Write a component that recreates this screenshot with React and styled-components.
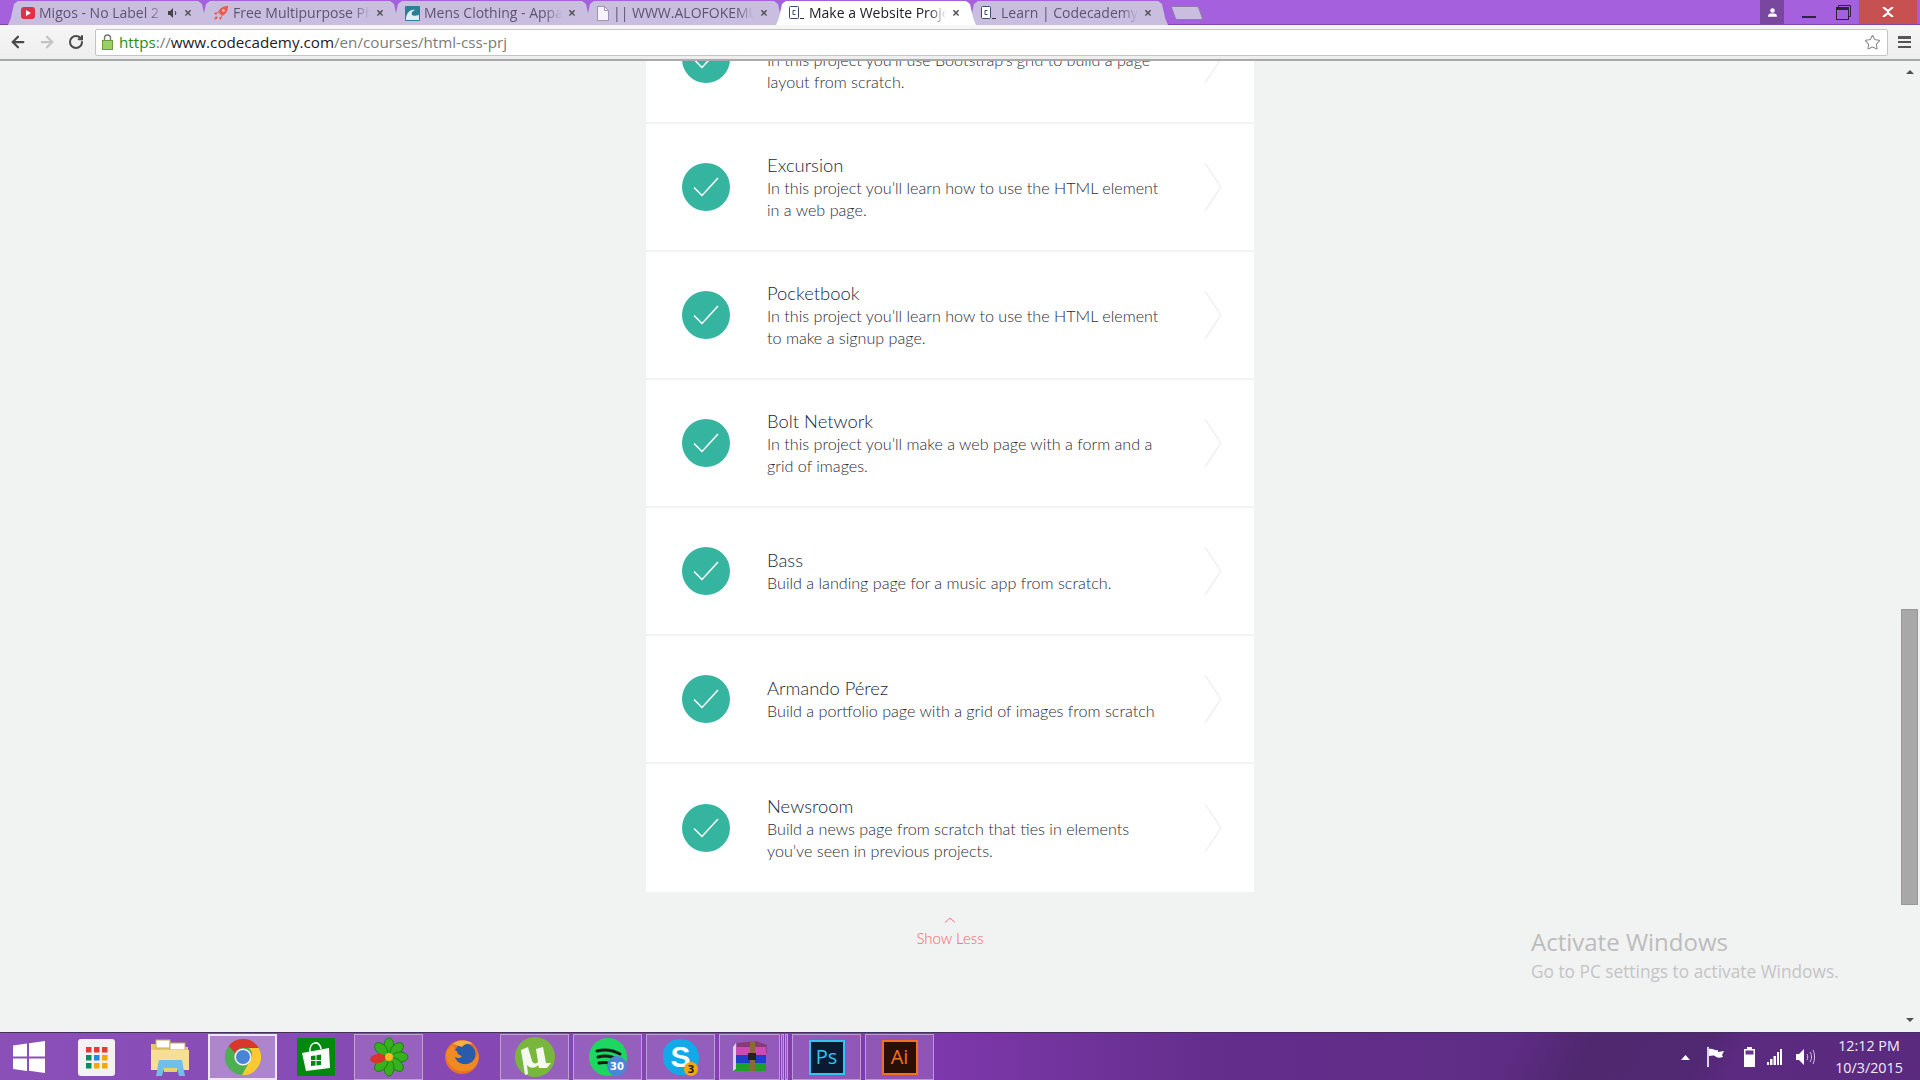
import styled, { createGlobalStyle } from "styled-components";
import { ArrowLeft, ArrowRight, RotateCw, Star } from "lucide-react";

const GlobalStyle = createGlobalStyle`
  html, body { margin: 0; padding: 0; background: #f1f2f2; }
  * { box-sizing: border-box; }
`;

const Screen = styled.div`
  width: 1920px;
  height: 1080px;
  display: flex;
  flex-direction: column;
  overflow: hidden;
  font-family: "Open Sans", "Liberation Sans", sans-serif;
`;

/* browser chrome */
const TitleBar = styled.div`
  height: 25px;
  flex: none;
  display: flex;
  background: #a561dd;
  border-bottom: 1px solid #7d4aa8;
`;

const TabStrip = styled.div`
  display: flex;
  padding: 1px 0 0 8px;
  height: 24px;
  filter: drop-shadow(0.6px 0 0 #8d7ca8);
`;

const Tab = styled.div`
  width: 200px;
  height: 24px;
  margin-right: -8px;
  padding: 0 14px 0 13px;
  display: flex;
  align-items: center;
  gap: 4px;
  flex: none;
  position: relative;
  z-index: ${({ $active }) => ($active ? 2 : 1)};
  background: ${({ $active }) => ($active ? "#ffffff" : "#c9bde0")};
  color: ${({ $active }) => ($active ? "#222" : "#5b5670")};
  clip-path: polygon(0 100%, 3px 70%, 6px 12%, 10px 0, 190px 0, 194px 12%, 197px 70%, 200px 100%);
`;

const TabLabel = styled.span`
  flex: 1;
  font-size: 14px;
  line-height: 20px;
  white-space: nowrap;
  overflow: hidden;
  -webkit-mask-image: linear-gradient(to right, #000 88%, transparent);
  mask-image: linear-gradient(to right, #000 88%, transparent);
`;

const TabClose = styled.span`
  width: 12px;
  font-size: 14px;
  font-weight: 700;
  line-height: 20px;
  text-align: center;
  color: #555;
`;

const NewTab = styled.div`
  width: 28px;
  height: 14px;
  margin: 5px 0 0 13px;
  flex: none;
  background: #c9bde0;
  border: 1px solid #8d7ca8;
  transform: skewX(20deg);
  border-radius: 2px;
`;

const WindowControls = styled.div`
  margin-left: auto;
  display: flex;
  height: 24px;
  padding-right: 3px;
`;

const ControlButton = styled.div`
  width: ${({ $w }) => $w}px;
  padding-right: ${({ $pr }) => $pr || 0}px;
  display: flex;
  align-items: center;
  justify-content: center;
  background: ${({ $bg }) => $bg || "transparent"};
`;

const Toolbar = styled.div`
  height: 36px;
  flex: none;
  display: flex;
  align-items: center;
  padding: 0 0 0 3px;
  background: linear-gradient(#f6f6f6, #eeeeee);
  border-bottom: 2px solid #a9a9a9;
`;

const NavButton = styled.div`
  width: 29px;
  display: flex;
  justify-content: center;
  color: ${({ $off }) => ($off ? "#c4c4c4" : "#4a4a4a")};
`;

const Omnibox = styled.div`
  margin-left: 5px;
  width: 1793px;
  height: 27px;
  display: flex;
  align-items: center;
  gap: 6px;
  padding: 0 6px;
  background: #fff;
  border: 1px solid #c4c4c4;
  border-radius: 2px;
  font-size: 15.2px;
`;

const Url = styled.div`
  flex: 1;
  color: #7b7b7b;
  white-space: nowrap;
  b { font-weight: 400; color: #1d8f1d; }
  i { font-style: normal; color: #222; }
`;

const MenuIcon = styled.div`
  margin-left: 10px;
  width: 13px;
  height: 12px;
  display: flex;
  flex-direction: column;
  justify-content: space-between;
  span { height: 2.5px; background: #555; display: block; }
`;

/* page */
const Body = styled.div`
  flex: 1;
  display: flex;
  min-height: 0;
`;

const Page = styled.div`
  flex: 1;
  position: relative;
  overflow: hidden;
  padding-left: 646px;
  background: #f1f2f2;
`;

const Card = styled.div`
  width: 608px;
  margin-top: -65px;
  background: #fff;
`;

const Row = styled.div`
  height: 128px;
  display: flex;
  align-items: center;
  padding: 0 32px 0 36px;
  border-bottom: ${({ $last }) => ($last ? "none" : "2px solid #f2f3f3")};
`;

const CheckCircle = styled.div`
  width: 48px;
  height: 48px;
  flex: none;
  border-radius: 50%;
  background: #35b5a0;
  display: flex;
  align-items: center;
  justify-content: center;
`;

const RowText = styled.div`
  margin-left: 37px;
  flex: 1;
`;

const RowTitle = styled.div`
  font-family: "Lato", "Noto Sans", sans-serif;
  font-weight: 300;
  font-size: 18.4px;
  line-height: 23px;
  color: #15293a;
`;

const RowDesc = styled.div`
  font-family: "Lato", "Noto Sans", sans-serif;
  font-weight: 300;
  font-size: 16.15px;
  line-height: 22px;
  color: #2b2b33;
  white-space: pre-line;
`;

const ShowLess = styled.div`
  width: 608px;
  padding-top: 25px;
  display: flex;
  flex-direction: column;
  align-items: center;
  gap: 5px;
  font-family: "Lato", "Noto Sans", sans-serif;
  font-weight: 300;
  font-size: 15px;
  line-height: 20px;
  color: #f9606e;
`;

const Watermark = styled.div`
  position: absolute;
  left: 1531px;
  top: 864px;
  color: #bcbcbc;
  font-family: "Open Sans", sans-serif;
  div:first-child { font-size: 24px; line-height: 34px; }
  div:last-child { font-size: 17.3px; line-height: 25px; color: #c4c4c4; }
`;

const ScrollTrack = styled.div`
  width: 19px;
  flex: none;
  display: flex;
  flex-direction: column;
  align-items: center;
  background: #f1f2f2;
  padding: 9px 2px 0 0;
`;

const ScrollThumb = styled.div`
  width: 17px;
  height: 296px;
  margin-top: 535px;
  background: #a8a8a8;
  border: 1px solid #989898;
`;

const ScrollArrow = styled.div`
  width: 0;
  height: 0;
  border-left: 4px solid transparent;
  border-right: 4px solid transparent;
  ${({ $down }) => ($down ? "border-top: 4px solid #505050; margin-top: 113px;" : "border-bottom: 4px solid #505050;")}
`;

/* taskbar */
const Taskbar = styled.div`
  height: 48px;
  flex: none;
  display: flex;
  align-items: stretch;
  padding-top: 1px;
  background:
    linear-gradient(118deg, transparent 78%, rgba(45, 30, 60, 0.28) 82%, rgba(45, 30, 60, 0.22) 88%, transparent 90%),
    linear-gradient(90deg, #8a50b8 0%, #8345b2 35%, #7d38ab 49%, #642e8c 63%, #5c2b82 85%, #592a7e 100%);
  border-top: 1px solid #43305e;
`;

const StartButton = styled.div`
  width: 58px;
  margin-right: 4px;
  display: flex;
  align-items: center;
  justify-content: center;
`;

const TaskButton = styled.div`
  width: ${({ $w }) => $w || 69}px;
  margin-right: ${({ $mr }) => ($mr === undefined ? 4 : $mr)}px;
  height: 46px;
  flex: none;
  display: flex;
  align-items: center;
  justify-content: center;
  position: relative;
  background: ${({ $state }) =>
    $state === "active" ? "rgba(255,255,255,0.32)" : $state === "open" ? "rgba(255,255,255,0.14)" : "transparent"};
  border: ${({ $state }) =>
    $state === "active" ? "2px solid #efe6f5" : $state === "open" ? "1.5px solid rgba(255,255,255,0.4)" : "none"};
`;

const Tray = styled.div`
  margin-left: auto;
  display: flex;
  align-items: center;
  color: #fff;
`;

const TrayIcon = styled.div`
  margin-right: ${({ $mr }) => $mr}px;
  display: flex;
  align-items: center;
`;

const Clock = styled.div`
  width: 85px;
  text-align: center;
  font-size: 14.3px;
  line-height: 22px;
  padding-right: 17px;
  color: #f3edf7;
`;

const PsTile = styled.div`
  width: 36px;
  height: 35px;
  display: flex;
  align-items: center;
  justify-content: center;
  background: ${({ $bg }) => $bg};
  border: 2px solid ${({ $c }) => $c};
  color: ${({ $c }) => $c};
  font-family: "Open Sans", sans-serif;
  font-size: 20px;
  line-height: 1;
`;

const Badge = styled.span`
  position: absolute;
  right: ${({ $r }) => $r}px;
  bottom: ${({ $b }) => $b}px;
  min-width: ${({ $s }) => $s}px;
  height: ${({ $s }) => $s}px;
  border-radius: 50%;
  display: flex;
  align-items: center;
  justify-content: center;
  background: ${({ $bg }) => $bg};
  color: ${({ $c }) => $c};
  font-family: "DejaVu Sans", sans-serif;
  font-weight: 700;
  font-size: 10px;
`;

/* small drawings */
const CodeFavicon = () => (
  <svg width="16" height="14" viewBox="0 0 16 14">
    <rect x="0.5" y="0.5" width="9" height="12" rx="1" fill="#fff" stroke="#3d4a70" />
    <path d="M6.5 4.5H4v4h2.5" fill="none" stroke="#3d4a70" />
    <path d="M11 12.5h4" stroke="#333" />
  </svg>
);

const YoutubeFavicon = () => (
  <svg width="14" height="12" viewBox="0 0 14 12">
    <rect width="14" height="12" rx="3" fill="#e0304a" />
    <path d="M5 3l5 3-5 3z" fill="#fff" />
  </svg>
);

const RocketFavicon = () => (
  <svg width="16" height="16" viewBox="0 0 16 16">
    <path d="M15 1c-5 0-8 2-10 6l4 4c4-2 6-5 6-10z" fill="#ee5a4f" />
    <path d="M5 7L1 8l2 2zM9 11l-1 4-2-2zM3 11l2 2-4 2z" fill="#e8503f" />
    <circle cx="10.5" cy="5.5" r="1.3" fill="#f9d0c8" />
  </svg>
);

const WaveFavicon = () => (
  <svg width="15" height="15" viewBox="0 0 15 15">
    <rect width="15" height="15" rx="1" fill="#2d7f96" />
    <path d="M1 12c1-6 5-9 9-8-3 1-4 3-3 5 1 1 3 1 7 0v5H1z" fill="#dfeef2" />
  </svg>
);

const PageFavicon = () => (
  <svg width="12" height="15" viewBox="0 0 12 15">
    <path d="M.5.5h7l4 4v10H.5z" fill="#f7f2fb" stroke="#9c93ad" />
    <path d="M7.5.5v4h4" fill="none" stroke="#9c93ad" />
  </svg>
);

const CheckMark = () => (
  <svg width="26" height="20" viewBox="0 0 26 20">
    <path d="M1 10.5L9 18.5 25 1" fill="none" stroke="#fff" strokeWidth="1.5" />
  </svg>
);

const Chevron = () => (
  <svg width="18" height="48" viewBox="0 0 18 48">
    <path d="M1 0L17 24 1 48" fill="none" stroke="#f0f1f1" strokeWidth="1.6" />
  </svg>
);

const WinLogo = () => (
  <svg width="34" height="34" viewBox="0 0 34 34">
    <path d="M1 5.5l14-2v13H1zM17 3.2L33 1v15.5H17zM1 18.5h14v12.5L1 29zM17 18.5h16V33l-16-2.2z" fill="#fff" />
  </svg>
);

const AppsTile = () => {
  const c = ["#e53935", "#e53935", "#e53935", "#0f8a5f", "#1e88e5", "#f5a800", "#0f8a5f", "#f5a800", "#f5a800"];
  return (
    <svg width="37" height="37" viewBox="0 0 37 37">
      <rect width="37" height="37" rx="3" fill="#f4f1f4" />
      {c.map((f, i) => (
        <rect key={i} x={8 + (i % 3) * 8} y={8 + Math.floor(i / 3) * 8} width="5.5" height="5.5" fill={f} />
      ))}
    </svg>
  );
};

const ExplorerIcon = () => (
  <svg width="40" height="38" viewBox="0 0 40 38">
    <path d="M1 6h14l3 3h20v22H1z" fill="#e9c866" />
    <rect x="6" y="2" width="14" height="8" fill="#fff" stroke="#c7ad5c" />
    <rect x="20" y="5" width="15" height="7" fill="#fff" stroke="#c7ad5c" />
    <path d="M1 12h38v20H1z" fill="#f6df94" />
    <path d="M6 38l3-16h23l3 16h-6l-2-8H14l-2 8z" fill="#6fc0e6" />
    <rect x="14" y="30" width="13" height="4" fill="#e7cf6e" />
  </svg>
);

const ChromeIcon = () => (
  <svg width="36" height="36" viewBox="0 0 36 36">
    <circle cx="18" cy="18" r="18" fill="#4caf50" />
    <path d="M18 0a18 18 0 0 1 15.6 9H18a9 9 0 0 0-8 5L3.6 7A18 18 0 0 1 18 0z" fill="#d9372c" />
    <path d="M33.6 9A18 18 0 0 1 17 36l7.8-14A9 9 0 0 0 24 9z" fill="#fcc934" />
    <circle cx="18" cy="18" r="8.6" fill="#f4f4f4" />
    <circle cx="18" cy="18" r="7" fill="#4a84d8" />
  </svg>
);

const StoreIcon = () => (
  <svg width="38" height="38" viewBox="0 0 38 38">
    <rect width="38" height="38" fill="#00890f" />
    <path d="M5 15l27-5 1 20-24 3z" fill="#fff" />
    <path d="M13 14c-1-11 10-12 11-3" fill="none" stroke="#fff" strokeWidth="1.6" />
    <path d="M14 18l4.5-.6v4.5H14zM19.5 17.2l4.5-.6v5.3h-4.5zM14 23h4.5v4.5l-4.5.5zM19.5 23H24v4l-4.5.5z" fill="#00890f" />
  </svg>
);

const IcqIcon = () => {
  const angles = [0, 45, 90, 135, 180, 225, 315];
  return (
    <svg width="40" height="40" viewBox="0 0 40 40">
      {angles.map((a) => (
        <ellipse key={a} cx="20" cy="9" rx="5" ry="8" fill="#36b01c" stroke="#14750c" strokeWidth="0.8" transform={`rotate(${a} 20 20)`} />
      ))}
      <ellipse cx="20" cy="9" rx="4.5" ry="8" fill="#d9342b" transform="rotate(262 20 20)" />
      <circle cx="20" cy="20" r="4" fill="#f5b81f" />
    </svg>
  );
};

const FirefoxIcon = () => (
  <svg width="36" height="36" viewBox="0 0 36 36">
    <circle cx="18" cy="18" r="17" fill="#e8702a" />
    <circle cx="21" cy="15" r="10.5" fill="#2a5bab" />
    <path d="M2 17C4 30 18 36 28 30c6-4 7-10 6-16-2 8-8 12-15 11-5-1-8-4-8-7 3 2 6 1 7-1-3-1-5-2-5-5-3 0-4-4-3-7C6 8 2 11 2 17z" fill="#f08a23" />
    <path d="M9 5c4-4 14-5 20 0-6-1-9 0-11 3-3-1-6-2-9-3z" fill="#f4b33d" />
  </svg>
);

const SpotifyIcon = () => (
  <svg width="38" height="38" viewBox="0 0 38 38">
    <circle cx="19" cy="19" r="19" fill="#1ed760" />
    <path d="M8 13c8-2 16-1 23 3M9 19c7-2 14-1 20 3M10 25c6-1 11-1 16 2" fill="none" stroke="#1a1a1a" strokeWidth="3" strokeLinecap="round" />
  </svg>
);

const UtorrentIcon = () => (
  <svg width="40" height="40" viewBox="0 0 40 40">
    <circle cx="20" cy="20" r="20" fill="#78b63c" />
    <path d="M6 13l7-3 4 14c1 3 5 3 6 1l-2-13 7-2 3 16 5 0-4 5h-8l-1-3c-3 4-9 3-11 0l1 9-3 1z" fill="#f5f8ee" />
  </svg>
);

const SkypeIcon = styled.div`
  width: 36px;
  height: 36px;
  border-radius: 45% 50% 45% 50%;
  background: #12a9e8;
  color: #fff;
  display: flex;
  align-items: center;
  justify-content: center;
  font-family: "Liberation Sans", sans-serif;
  font-weight: 700;
  font-size: 30px;
`;

const WinrarIcon = () => (
  <svg width="36" height="32" viewBox="0 0 36 32">
    <path d="M5 2L24 0l11 4v8H5z" fill="#8a3a7a" />
    <rect x="1" y="6" width="33" height="8" fill="#c94db0" />
    <rect x="1" y="14" width="33" height="8" fill="#1f3fc9" />
    <rect x="1" y="22" width="33" height="8" fill="#1e9e2c" />
    <path d="M1 6l3-4v26l-3 2z" fill="#d8d8d8" />
    <rect x="18" y="0" width="5" height="30" fill="#8a6a3a" />
    <rect x="16" y="12" width="8" height="7" fill="#222" />
  </svg>
);

const Flag = () => (
  <svg width="18" height="20" viewBox="0 0 18 20">
    <path d="M1 0v20" stroke="#fff" strokeWidth="1.6" />
    <path d="M2 2c4-1 6 2 9 1v2l6-1-2 4 1 2c-4 1-6 1-8-1-2-1-4 0-6 0z" fill="#fff" />
  </svg>
);

const Battery = () => (
  <svg width="11" height="20" viewBox="0 0 11 20">
    <path d="M3 0h5v2h3v18H0V2h3z" fill="#fff" />
    <rect x="1.5" y="3.5" width="8" height="4" fill="#6b3592" />
  </svg>
);

const Signal = () => (
  <svg width="15" height="16" viewBox="0 0 15 16">
    <path d="M0 13h2v3H0zM3 10h2.5v6H3zM6.5 7H9v9H6.5zM10 3h2v13h-2zM13 0h2v16h-2z" fill="#fff" />
  </svg>
);

const Speaker = () => (
  <svg width="19" height="18" viewBox="0 0 19 18">
    <path d="M0 6h3l5-5v16l-5-5H0z" fill="#fff" />
    <path d="M11 6c1 2 1 4 0 6M14 4c2 3 2 7 0 10M17 2c2 4 2 10 0 14" fill="none" stroke="#d9c8e6" />
  </svg>
);

const tabs = [
  { label: "Migos - No Label 2", icon: <YoutubeFavicon />, audio: true },
  { label: "Free Multipurpose Pho", icon: <RocketFavicon /> },
  { label: "Mens Clothing - Apparel", icon: <WaveFavicon /> },
  { label: "|| WWW.ALOFOKEMUSIC", icon: <PageFavicon /> },
  { label: "Make a Website Project", icon: <CodeFavicon />, active: true },
  { label: "Learn | Codecademy", icon: <CodeFavicon /> },
];

const lessons = [
  { title: "Broadway", desc: "In this project you’ll use Bootstrap’s grid to build a page\nlayout from scratch." },
  { title: "Excursion", desc: "In this project you’ll learn how to use the HTML element\nin a web page." },
  { title: "Pocketbook", desc: "In this project you’ll learn how to use the HTML element\nto make a signup page." },
  { title: "Bolt Network", desc: "In this project you’ll make a web page with a form and a\ngrid of images." },
  { title: "Bass", desc: "Build a landing page for a music app from scratch." },
  { title: "Armando Pérez", desc: "Build a portfolio page with a grid of images from scratch" },
  { title: "Newsroom", desc: "Build a news page from scratch that ties in elements\nyou’ve seen in previous projects." },
];

export default function App() {
  return (
    <Screen>
      <GlobalStyle />
      <TitleBar>
        <TabStrip>
          {tabs.map((t) => (
            <Tab key={t.label} $active={t.active}>
              {t.icon}
              <TabLabel>{t.label}</TabLabel>
              {t.audio && (
                <svg width="10" height="10" viewBox="0 0 10 10">
                  <path d="M0 3h2l3-3v10L2 7H0z" fill="#444" />
                  <path d="M7 3c1 1 1 3 0 4" fill="none" stroke="#444" />
                </svg>
              )}
              <TabClose>×</TabClose>
            </Tab>
          ))}
          <NewTab />
        </TabStrip>
        <WindowControls>
          <ControlButton $w={24} $bg="#7a479f">
            <svg width="9" height="9" viewBox="0 0 14 13">
              <circle cx="7" cy="3.5" r="3.5" fill="#fff" />
              <path d="M0 13c0-4 2-5 4-5h6c2 0 4 1 4 5z" fill="#fff" />
            </svg>
          </ControlButton>
          <ControlButton $w={50}>
            <svg width="14" height="14" viewBox="0 0 14 14">
              <path d="M0 12h14" stroke="#2c2438" strokeWidth="2" />
            </svg>
          </ControlButton>
          <ControlButton $w={25} $pr={6}>
            <svg width="15" height="15" viewBox="0 0 15 15">
              <path d="M2.5 2.5V.5h12v11h-2" fill="none" stroke="#2c2438" />
              <rect x="0.5" y="2.5" width="12" height="12" fill="none" stroke="#2c2438" />
              <path d="M0 4h13" stroke="#2c2438" strokeWidth="2" />
            </svg>
          </ControlButton>
          <ControlButton $w={58} $bg="#c75050">
            <svg width="12" height="10" viewBox="0 0 12 10">
              <path d="M1 0l5 4 5-4M1 10l5-4 5 4" fill="none" stroke="#fff" strokeWidth="2.2" />
            </svg>
          </ControlButton>
        </WindowControls>
      </TitleBar>

      <Toolbar>
        <NavButton><ArrowLeft size={18} strokeWidth={3} /></NavButton>
        <NavButton $off><ArrowRight size={18} strokeWidth={3} /></NavButton>
        <NavButton><RotateCw size={16} strokeWidth={3} /></NavButton>
        <Omnibox>
          <svg width="11" height="16" viewBox="0 0 11 16">
            <path d="M2.5 7V4a3 3 0 0 1 6 0v3" fill="none" stroke="#777" strokeWidth="1.4" />
            <rect x="0.5" y="6.5" width="10" height="9" fill="#9bd063" stroke="#6f9a3f" />
          </svg>
          <Url><b>https</b>://<i>www.codecademy.com</i>/en/courses/html-css-prj</Url>
          <Star size={17} color="#8a8a8a" strokeWidth={1.5} />
        </Omnibox>
        <MenuIcon><span /><span /><span /></MenuIcon>
      </Toolbar>

      <Body>
        <Page>
          <Card>
            {lessons.map((l, i) => (
              <Row key={l.title} $last={i === lessons.length - 1}>
                <CheckCircle><CheckMark /></CheckCircle>
                <RowText>
                  <RowTitle>{l.title}</RowTitle>
                  <RowDesc>{l.desc}</RowDesc>
                </RowText>
                <Chevron />
              </Row>
            ))}
          </Card>
          <ShowLess>
            <svg width="12" height="6" viewBox="0 0 12 6">
              <path d="M1 5.5L6 1l5 4.5" fill="none" stroke="#fb6f7c" />
            </svg>
            Show Less
          </ShowLess>
          <Watermark>
            <div>Activate Windows</div>
            <div>Go to PC settings to activate Windows.</div>
          </Watermark>
        </Page>
        <ScrollTrack>
          <ScrollArrow />
          <ScrollThumb />
          <ScrollArrow $down />
        </ScrollTrack>
      </Body>

      <Taskbar>
        <StartButton><WinLogo /></StartButton>
        <TaskButton><AppsTile /></TaskButton>
        <TaskButton><ExplorerIcon /></TaskButton>
        <TaskButton $state="active"><ChromeIcon /></TaskButton>
        <TaskButton><StoreIcon /></TaskButton>
        <TaskButton $state="open"><IcqIcon /></TaskButton>
        <TaskButton><FirefoxIcon /></TaskButton>
        <TaskButton $state="open"><UtorrentIcon /></TaskButton>
        <TaskButton $state="open">
          <SpotifyIcon />
          <Badge $r={14} $b={3} $s={20} $bg="#4a86d8" $c="#fff">30</Badge>
        </TaskButton>
        <TaskButton $state="open">
          <SkypeIcon>S</SkypeIcon>
          <Badge $r={16} $b={3} $s={14} $bg="#f5a800" $c="#222">3</Badge>
        </TaskButton>
        <TaskButton $state="open" $w={61} $mr={1}><WinrarIcon /></TaskButton>
        <TaskButton $state="open" $w={3} $mr={1} />
        <TaskButton $state="open" $w={3} $mr={4} />
        <TaskButton $state="open"><PsTile $bg="#0a1a33" $c="#31c5f4">Ps</PsTile></TaskButton>
        <TaskButton $state="open"><PsTile $bg="#2a0f05" $c="#f37021">Ai</PsTile></TaskButton>
        <Tray>
          <TrayIcon $mr={17}>
            <svg width="9" height="5" viewBox="0 0 9 5"><path d="M0 5L4.5 0 9 5z" fill="#fff" /></svg>
          </TrayIcon>
          <TrayIcon $mr={19}><Flag /></TrayIcon>
          <TrayIcon $mr={12}><Battery /></TrayIcon>
          <TrayIcon $mr={14}><Signal /></TrayIcon>
          <TrayIcon $mr={20}><Speaker /></TrayIcon>
          <Clock>12:12 PM<br />10/3/2015</Clock>
        </Tray>
      </Taskbar>
    </Screen>
  );
}
